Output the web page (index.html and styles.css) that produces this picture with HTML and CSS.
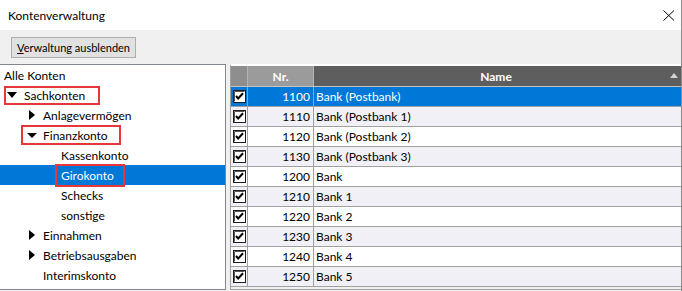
FILE: index.html
```html
<!DOCTYPE html>
<html lang="de">
<head>
  <meta charset="UTF-8">
  <title>Kontenverwaltung</title>
  <link rel="stylesheet" href="styles.css">
</head>
<body>

<div class="window">

  <div class="titlebar">
    <span>Kontenverwaltung</span>
    <svg class="close" width="12" height="11" viewBox="0 0 12 11">
      <path d="M0.5 0.5 L11 10.5 M11 0.5 L0.5 10.5" stroke="#000" stroke-width="1" fill="none"/>
    </svg>
  </div>

  <div class="toolbar">
    <button class="btn"><u>V</u>erwaltung ausblenden</button>
  </div>

  <div class="main">

    <!-- Kontenbaum -->
    <div class="tree">
      <div class="node root">Alle Konten</div>
      <div class="node lvl0">
        <span class="mark mark-sach">
          <svg class="exp" width="17" height="20"><polygon points="0,7 10,7 5,13" fill="#000"/></svg>Sachkonten
        </span>
      </div>
      <div class="node lvl1">
        <svg class="exp" width="17" height="20"><polygon points="3,5 9,10 3,15" fill="#000"/></svg>Anlagevermögen
      </div>
      <div class="node lvl1">
        <span class="mark mark-fin">
          <svg class="exp" width="17" height="20"><polygon points="1,8 11,8 6,13" fill="#000"/></svg>Finanzkonto
        </span>
      </div>
      <div class="node lvl2">Kassenkonto</div>
      <div class="node lvl2 selected"><span class="mark mark-giro">Girokonto</span></div>
      <div class="node lvl2">Schecks</div>
      <div class="node lvl2">sonstige</div>
      <div class="node lvl1">
        <svg class="exp" width="17" height="20"><polygon points="3,5 9,10 3,15" fill="#000"/></svg>Einnahmen
      </div>
      <div class="node lvl1">
        <svg class="exp" width="17" height="20"><polygon points="3,5 9,10 3,15" fill="#000"/></svg>Betriebsausgaben
      </div>
      <div class="node lvl1"><span class="exp"></span>Interimskonto</div>
    </div>

    <!-- Kontenliste -->
    <div class="grid">
      <div class="row head">
        <div class="cell c-check"></div>
        <div class="cell c-nr">Nr.</div>
        <div class="cell c-name">
          <span></span><span>Name</span>
          <svg class="sort" width="8" height="5"><polygon points="0,5 8,5 4,0" fill="#d2d2d2"/></svg>
        </div>
      </div>
      <div id="rows"></div>
    </div>

  </div>
</div>

<script>
  // Kontenliste
  const konten = [
    ['1100', 'Bank (Postbank)'],
    ['1110', 'Bank (Postbank 1)'],
    ['1120', 'Bank (Postbank 2)'],
    ['1130', 'Bank (Postbank 3)'],
    ['1200', 'Bank'],
    ['1210', 'Bank 1'],
    ['1220', 'Bank 2'],
    ['1230', 'Bank 3'],
    ['1240', 'Bank 4'],
    ['1250', 'Bank 5']
  ];

  const checkbox =
    '<svg width="13" height="13" viewBox="0 0 13 13">' +
    '<rect x="0.5" y="0.5" width="12" height="12" fill="#fff" stroke="#1e1e1e"/>' +
    '<path d="M1.5 1.5 H11.5 M1.5 1.5 V11.5" stroke="#555" fill="none"/>' +
    '<path d="M3 6 L5.2 8.5 L10 3.3" stroke="#000" stroke-width="2" fill="none"/>' +
    '</svg>';

  const rows = document.getElementById('rows');
  konten.forEach(function (k, i) {
    const row = document.createElement('div');
    row.className = 'row' + (i === 0 ? ' selected' : '') + (i % 2 ? ' alt' : '');
    row.innerHTML =
      '<div class="cell c-check">' + checkbox + '</div>' +
      '<div class="cell c-nr">' + k[0] + '</div>' +
      '<div class="cell c-name">' + k[1] + '</div>';
    rows.appendChild(row);
  });
</script>

</body>
</html>
```

FILE: styles.css
```css
body {
  margin: 0;
  width: 682px;
  height: 291px;
  overflow: hidden;
  font-family: Lato, 'Noto Sans', sans-serif;
  font-size: 12px;
  color: #000;
  background: #f0f0f0;
}

.window {
  box-sizing: border-box;
  width: 682px;
  height: 291px;
  border-right: 1px solid #8c8c8c;
  display: flex;
  flex-direction: column;
}

/* Titelzeile */
.titlebar {
  height: 30px;
  flex: none;
  background: #fff;
  display: flex;
  align-items: center;
  justify-content: space-between;
  padding: 0 6px 0 8px;
}

.close {
  margin-top: 1px;
}

/* Werkzeugleiste */
.toolbar {
  box-sizing: border-box;
  height: 34px;
  flex: none;
  padding: 7px 0 0 11px;
}

.btn {
  box-sizing: border-box;
  width: 125px;
  height: 21px;
  padding: 0;
  border: 1px solid #adadad;
  background: #e1e1e1;
  font-family: inherit;
  font-size: 11px;
  color: #000;
  white-space: nowrap;
}

.main {
  height: 226px;
  flex: none;
  display: flex;
  gap: 4px;
}

/* Baum */
.tree {
  box-sizing: border-box;
  width: 226px;
  flex: none;
  background: #fff;
  border-top: 1px solid #828790;
  border-right: 1px solid #828790;
  border-bottom: 1px solid #828790;
}

.node {
  height: 20px;
  display: flex;
  align-items: center;
  white-space: nowrap;
}

.node.root { padding-left: 4px; }
.node.lvl0 { padding-left: 7px; }
.node.lvl1 { padding-left: 26px; }
.node.lvl2 { padding-left: 61px; }

.exp {
  flex: none;
  width: 17px;
  height: 20px;
  display: block;
}

.node.selected {
  background: #0078d7;
  color: #fff;
}

/* rote Markierungen */
.mark {
  box-sizing: border-box;
  display: inline-flex;
  align-items: center;
  flex: none;
  outline: 2px solid #e8363d;
  outline-offset: -2px;
}

.mark-sach {
  margin-left: -3px;
  padding-left: 3px;
  width: 96px;
  height: 19px;
}

.mark-fin {
  margin-left: -5px;
  padding-left: 5px;
  width: 100px;
  height: 20px;
}

.mark-giro {
  margin-left: -6px;
  padding-left: 6px;
  width: 70px;
  height: 23px;
}

/* Tabelle */
.grid {
  flex: 1;
  display: flex;
  flex-direction: column;
  border-top: 2px solid #fff;
  border-left: 1px solid #a0a0a0;
  border-bottom: 1px solid #a0a0a0;
  background: #f0f0f0;
}

.row {
  box-sizing: border-box;
  height: 20px;
  display: grid;
  grid-template-columns: 17px 66px 1fr;
  border-bottom: 1px solid #a0a0a0;
  background: #fff;
}

.row.alt {
  background: #f0f0f6;
}

.row.selected {
  background: #0078d7;
  color: #fff;
}

.cell {
  box-sizing: border-box;
  border-right: 1px solid #a0a0a0;
  display: flex;
  align-items: center;
  white-space: nowrap;
}

.cell:last-child {
  border-right: none;
}

.c-check {
  padding-left: 2px;
}

.c-check svg {
  display: block;
}

.c-nr {
  justify-content: flex-end;
  padding-right: 3px;
}

.c-name {
  padding-left: 2px;
}

.row.head {
  height: 21px;
  border-bottom: 1px solid #c4c4c4;
  color: #fff;
  font-weight: bold;
}

.head .cell {
  border-right-color: #b4b4b4;
}

.head .c-check { background: #8e8e8e; }
.head .c-nr { background: #9b9b9b; justify-content: center; padding-right: 0; }

.head .c-name {
  background: #5e5e5e;
  display: grid;
  grid-template-columns: 1fr auto 1fr;
  align-items: center;
  padding: 0 3px 0 0;
}

.sort {
  justify-self: end;
  margin-bottom: 1px;
}
```
